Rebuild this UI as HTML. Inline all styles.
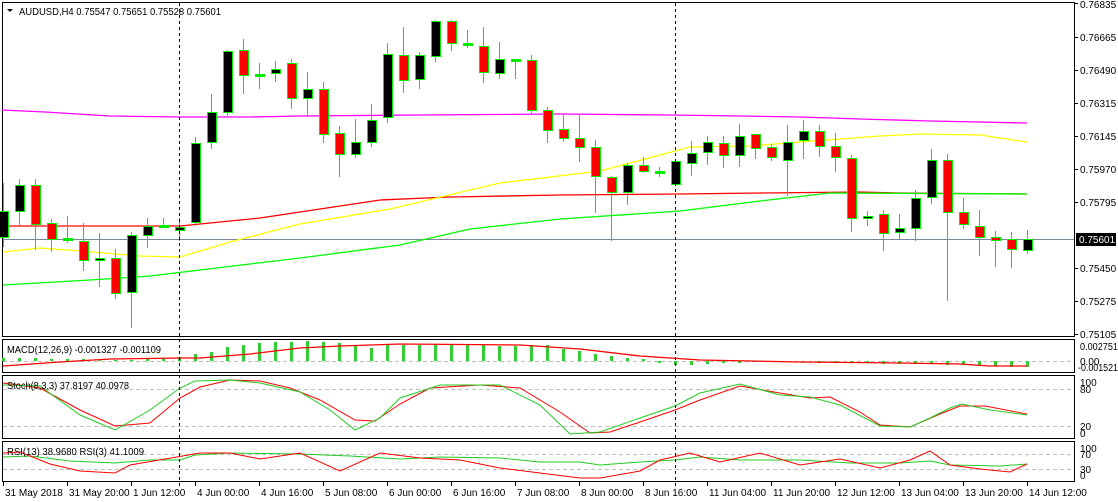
<!DOCTYPE html>
<html><head><meta charset="utf-8"><style>
html,body{margin:0;padding:0;background:#fff;}
svg{display:block;font-family:"Liberation Sans",sans-serif;font-size:10px;}
</style></head><body>
<svg id="s" width="1118" height="502" xmlns="http://www.w3.org/2000/svg">
<rect width="1118" height="502" fill="#fff"/>
<g fill="none" stroke="#000" stroke-width="1">
<rect x="2.5" y="2.5" width="1072" height="334"/>
<rect x="2.5" y="339.5" width="1072" height="33"/>
<rect x="2.5" y="375.5" width="1072" height="63"/>
<rect x="2.5" y="441.5" width="1072" height="40"/>
</g>
<g stroke="#c0c0c0" stroke-dasharray="4,3" stroke-width="1">
<line x1="3" y1="361.5" x2="1074" y2="361.5"/>
<line x1="3" y1="389.5" x2="1074" y2="389.5"/>
<line x1="3" y1="426.5" x2="1074" y2="426.5"/>
<line x1="3" y1="454.5" x2="1074" y2="454.5"/>
<line x1="3" y1="469.5" x2="1074" y2="469.5"/>
</g>
<line x1="3" y1="239.5" x2="1074" y2="239.5" stroke="#778899"/>
<g id="mas" fill="none" stroke-width="1.3">
<polyline stroke="#ff00ff" points="2,110 45,112 110,116 180,117 250,117 300,116 420,115 560,114 670,115 740,116 800,117 860,119 930,121 1027,123"/>
<polyline stroke="#ff0000" points="8,226 90,226 180,226 220,222 260,218 380,200 450,197 560,195 680,194 760,193 860,192 900,193 1027,194"/>
<polyline stroke="#ffff00" points="3,252 40,248 80,251 140,256 180,257 230,242 300,224 390,209 500,183 600,171 690,147 750,146 800,142 880,136 920,134 980,135 1027,142"/>
<polyline stroke="#00ff00" points="3,285 90,280 150,276 200,270 300,258 400,245 470,229 560,219 680,211 760,201 830,193 1027,194"/>
</g>
<g id="candles"></g>
<g id="macd"></g>
<polyline fill="none" stroke="#ff0000" stroke-width="1.3" points="3,366 60,362 110,359 180,358 200,358 250,354 300,348 340,346 400,344 520,345 580,349 640,356 700,360 800,362 900,363 960,364 990,366 1027,366"/>
<polyline fill="none" stroke="#ff0000" points="3,383 40,388 80,410 115,426 150,423 180,398 200,387 230,380 260,381 290,388 320,400 355,420 375,421 400,404 430,388 480,385 520,388 560,412 590,433 610,432 640,422 675,410 700,400 740,386 780,393 810,398 830,397 860,412 880,425 910,427 940,414 960,406 985,406 1027,414"/>
<polyline fill="none" stroke="#22cc22" points="3,385 40,386 80,415 115,430 150,410 180,388 195,381 230,380 260,383 300,392 330,410 355,430 380,418 400,398 440,385 500,385 540,405 570,434 600,432 640,418 675,406 700,393 740,384 780,395 810,397 840,405 880,426 910,427 930,418 950,408 962,404 990,410 1027,415"/>
<polyline fill="none" stroke="#22cc22" points="3,457 30,456 70,461 115,463 150,460 180,460 195,455 230,453 300,454 350,456 400,459 440,457 500,458 540,462 580,462 600,465 640,462 675,460 700,457 740,460 800,460 850,463 900,463 930,461 950,465 1000,466 1027,464"/>
<polyline fill="none" stroke="#ff0000" points="3,453 20,452 50,464 80,471 115,473 130,465 200,453 230,453 260,459 300,453 340,471 380,453 420,458 460,460 500,468 540,473 580,478 600,478 640,471 660,460 690,453 720,462 760,453 800,465 840,459 880,468 910,460 930,451 950,465 980,469 1010,472 1027,464"/>
<g stroke="#000" stroke-dasharray="3,3">
<line x1="179.5" y1="3" x2="179.5" y2="487"/>
<line x1="675.5" y1="3" x2="675.5" y2="487"/>
</g>
<path d="M7 9 L13 9 L10 12 Z" fill="#000"/>
<text x="19" y="15" fill="#000" textLength="202" lengthAdjust="spacingAndGlyphs">AUDUSD,H4  0.75547 0.75651 0.75528 0.75601</text>
<text x="7" y="353" fill="#000" textLength="154" lengthAdjust="spacingAndGlyphs">MACD(12,26,9) -0.001327 -0.001109</text>
<text x="7" y="389" fill="#000" textLength="122" lengthAdjust="spacingAndGlyphs">Stoch(8,3,3) 37.8197 40.0978</text>
<text x="7" y="455" fill="#000" textLength="137" lengthAdjust="spacingAndGlyphs">RSI(13) 38.9680  RSI(3) 41.1009</text>
<g fill="#000">
<text x="1080" y="8">0.76835</text>
<text x="1080" y="41">0.76665</text>
<text x="1080" y="74">0.76490</text>
<text x="1080" y="107">0.76315</text>
<text x="1080" y="140">0.76145</text>
<text x="1080" y="173">0.75970</text>
<text x="1080" y="206">0.75795</text>
<text x="1080" y="272">0.75450</text>
<text x="1080" y="305">0.75275</text>
<text x="1080" y="338">0.75105</text>
<text x="1080" y="350" textLength="38" lengthAdjust="spacingAndGlyphs">0.002751</text>
<text x="1080" y="365">0.00</text>
<text x="1078" y="371" textLength="40" lengthAdjust="spacingAndGlyphs">-0.001521</text>
<text x="1080" y="386">100</text>
<text x="1080" y="393">80</text>
<text x="1080" y="430">20</text>
<text x="1080" y="437">0</text>
<text x="1080" y="452">100</text>
<text x="1080" y="458">70</text>
<text x="1080" y="473">30</text>
<text x="1080" y="479">0</text>
</g>
<g stroke="#000">
<line x1="1075" y1="3.5" x2="1078" y2="3.5"/><line x1="1075" y1="37.5" x2="1078" y2="37.5"/><line x1="1075" y1="70.5" x2="1078" y2="70.5"/><line x1="1075" y1="103.5" x2="1078" y2="103.5"/><line x1="1075" y1="136.5" x2="1078" y2="136.5"/><line x1="1075" y1="169.5" x2="1078" y2="169.5"/><line x1="1075" y1="202.5" x2="1078" y2="202.5"/><line x1="1075" y1="268.5" x2="1078" y2="268.5"/><line x1="1075" y1="301.5" x2="1078" y2="301.5"/><line x1="1075" y1="334.5" x2="1078" y2="334.5"/>
</g>
<rect x="1076" y="233" width="40" height="13" fill="#000"/>
<text x="1079" y="243" fill="#fff">0.75601</text>
<g id="ticks" stroke="#000"></g>
<g fill="#000">
<text x="5" y="496">31 May 2018</text>
<text x="69" y="496">31 May 20:00</text>
<text x="133" y="496">1 Jun 12:00</text>
<text x="197" y="496">4 Jun 00:00</text>
<text x="261" y="496">4 Jun 16:00</text>
<text x="325" y="496">5 Jun 08:00</text>
<text x="389" y="496">6 Jun 00:00</text>
<text x="453" y="496">6 Jun 16:00</text>
<text x="517" y="496">7 Jun 08:00</text>
<text x="581" y="496">8 Jun 00:00</text>
<text x="645" y="496">8 Jun 16:00</text>
<text x="709" y="496">11 Jun 04:00</text>
<text x="773" y="496">11 Jun 20:00</text>
<text x="837" y="496">12 Jun 12:00</text>
<text x="901" y="496">13 Jun 04:00</text>
<text x="965" y="496">13 Jun 20:00</text>
<text x="1029" y="496">14 Jun 12:00</text>
</g>
</svg>
<script>
var NS="http://www.w3.org/2000/svg";
function el(p,t,a){var e=document.createElementNS(NS,t);for(var k in a)e.setAttribute(k,a[k]);p.appendChild(e);return e;}
var C=[[211,237,183,247,1],[185,211,179,225,1],[185,224,179,250,0],[223,239,219,252,0],[239,239,216,243,2],[241,260,223,271,0],[258,260,233,287,1],[258,293,249,299,0],[235,292,232,328,1],[226,235,218,248,1],[226,226,218,228,2],[227,230,218,241,1],[143,222,137,226,1],[112,142,94,149,1],[51,112,50,116,1],[50,75,39,94,0],[75,75,63,89,2],[69,73,61,82,1],[63,98,59,109,0],[89,98,72,117,1],[89,134,82,143,0],[133,154,126,177,0],[142,154,119,158,1],[120,142,104,147,1],[54,117,43,123,1],[55,80,27,93,0],[55,79,52,89,1],[21,56,20,62,1],[21,43,20,51,0],[44,44,30,48,2],[46,72,27,83,0],[59,73,42,79,1],[60,60,60,79,2],[60,110,55,114,0],[110,130,107,143,0],[129,138,114,142,0],[138,147,114,162,0],[147,176,140,213,0],[177,192,176,241,0],[165,192,163,205,1],[165,171,157,173,0],[172,172,167,177,2],[161,184,161,184,1],[153,163,141,176,1],[142,152,136,165,1],[143,155,136,168,0],[136,155,124,167,1],[134,148,134,159,0],[147,157,144,161,0],[142,160,125,196,1],[131,140,120,159,1],[131,146,125,157,0],[146,157,133,172,0],[158,218,155,232,0],[216,218,211,226,1],[214,233,210,251,0],[228,232,214,239,1],[198,228,190,241,1],[160,197,149,204,1],[160,212,154,301,0],[212,224,198,229,0],[226,237,210,256,0],[237,240,231,267,0],[239,249,232,268,0],[239,250,230,254,1]];
var g=document.getElementById("candles");
C.forEach(function(c,k){var x=3+16*k;
 el(g,"line",{x1:x+.5,y1:c[2],x2:x+.5,y2:c[3],stroke:"#00ee00","stroke-width":1});
 if(c[4]==2){el(g,"rect",{x:x-4,y:c[0]-1,width:10,height:3,fill:"#00ee00"});}
 else{el(g,"rect",{x:x-3.5,y:c[0]+.5,width:9,height:Math.max(c[1]-c[0],2),fill:c[4]?"#000":"#ff0000",stroke:"#00ee00","stroke-width":1});}
});
var M=[358,358,358,359,359,359,360,360,360,359,358,357,354,352,347,345,343,342,342,341,342,343,346,348,345,345,345,344,344,344,345,346,346,345,345,349,351,354,356,358,359,363,365,365,364,363,363,362,362,362,362,363,363,363,363,364,364,364,364,365,365,366,366,367,367];
var mg=document.getElementById("macd");
M.forEach(function(t,k){var x=3+16*k;var y1=Math.min(t,361),h=Math.abs(t-361)||1;
 el(mg,"rect",{x:x-1,y:y1,width:3,height:h,fill:"#33cc33"});});
var tg=document.getElementById("ticks");
for(var k=0;k<17;k++){var x=3+64*k;el(tg,"line",{x1:x+.5,y1:482,x2:x+.5,y2:486});}
</script>
</body></html>
